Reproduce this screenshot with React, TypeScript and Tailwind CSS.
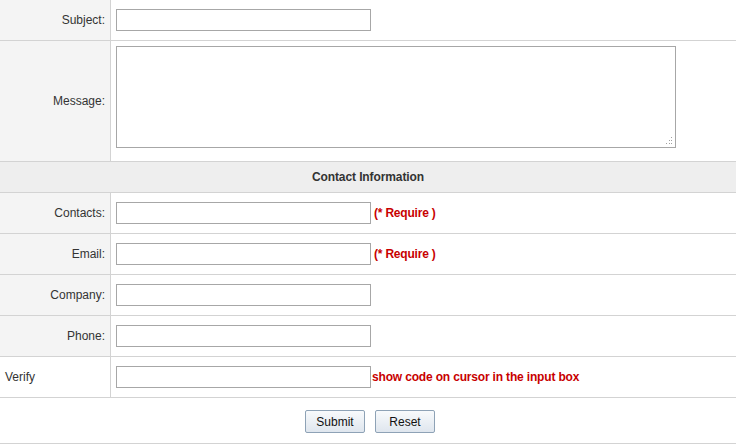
import type { ReactNode } from 'react'

const font = { fontFamily: '"Liberation Sans", Arial, sans-serif' }

function Row({ label, children, plain = false }: { label: string; children: ReactNode; plain?: boolean }) {
  return (
    <div className="flex h-[41px] border-b border-[#d3d3d3]">
      <div
        className={`w-[111px] shrink-0 border-r border-[#d3d3d3] flex items-center ${
          plain ? 'bg-white justify-start pl-[5px]' : 'bg-[#f4f4f4] justify-end pr-[5px]'
        }`}
      >
        {label}
      </div>
      <div className="flex-1 flex items-center pl-[5px]">{children}</div>
    </div>
  )
}

function TextInput() {
  return <input type="text" className="w-[255px] h-[22px] border border-[#a7a7a7] bg-white outline-none" />
}

function Required() {
  return <span className="ml-[3px] font-bold text-[#c80000] tracking-[-0.2px]">(* Require )</span>
}

export default function App() {
  return (
    <div className="w-[736px] h-[444px] bg-white text-[12px] text-[#333] overflow-hidden" style={font}>
      <Row label="Subject:">
        <TextInput />
      </Row>

      {/* message row is taller, textarea sits at the top */}
      <div className="flex h-[121px] border-b border-[#d3d3d3]">
        <div className="w-[111px] shrink-0 border-r border-[#d3d3d3] bg-[#f4f4f4] flex items-center justify-end pr-[5px]">
          Message:
        </div>
        <div className="flex-1 pl-[5px] pt-[5px]">
          <div className="relative w-[560px] h-[102px]">
            <textarea className="block w-full h-full border border-[#a7a7a7] bg-white resize-none outline-none" />
            <svg className="absolute right-[3px] bottom-[3px]" width="8" height="8" viewBox="0 0 8 8">
              <g fill="#a0a0a0">
                <rect x="6" y="0" width="1" height="1" />
                <rect x="4" y="3" width="1" height="1" />
                <rect x="6" y="3" width="1" height="1" />
                <rect x="1" y="6" width="1" height="1" />
                <rect x="4" y="6" width="1" height="1" />
                <rect x="6" y="6" width="1" height="1" />
              </g>
            </svg>
          </div>
        </div>
      </div>

      <div className="h-[31px] border-b border-[#d3d3d3] bg-[#eeeeee] flex items-center justify-center font-bold tracking-[-0.1px]">
        Contact Information
      </div>

      <Row label="Contacts:">
        <TextInput />
        <Required />
      </Row>
      <Row label="Email:">
        <TextInput />
        <Required />
      </Row>
      <Row label="Company:">
        <TextInput />
      </Row>
      <Row label="Phone:">
        <TextInput />
      </Row>
      <Row label="Verify" plain>
        <TextInput />
        <span className="ml-[1px] font-bold text-[#c80000] tracking-[-0.17px]">show code on cursor in the input box</span>
      </Row>

      <div className="h-[46px] border-b border-[#d3d3d3] flex items-center justify-center gap-[10px] pl-[4px] pt-[2px]">
        <button className="w-[60px] h-[23px] border border-[#8ea2b6] rounded-[2px] bg-gradient-to-b from-[#f8fafc] to-[#dfe6ee] text-[#111]">
          Submit
        </button>
        <button className="w-[60px] h-[23px] border border-[#8ea2b6] rounded-[2px] bg-gradient-to-b from-[#f8fafc] to-[#dfe6ee] text-[#111]">
          Reset
        </button>
      </div>
    </div>
  )
}
